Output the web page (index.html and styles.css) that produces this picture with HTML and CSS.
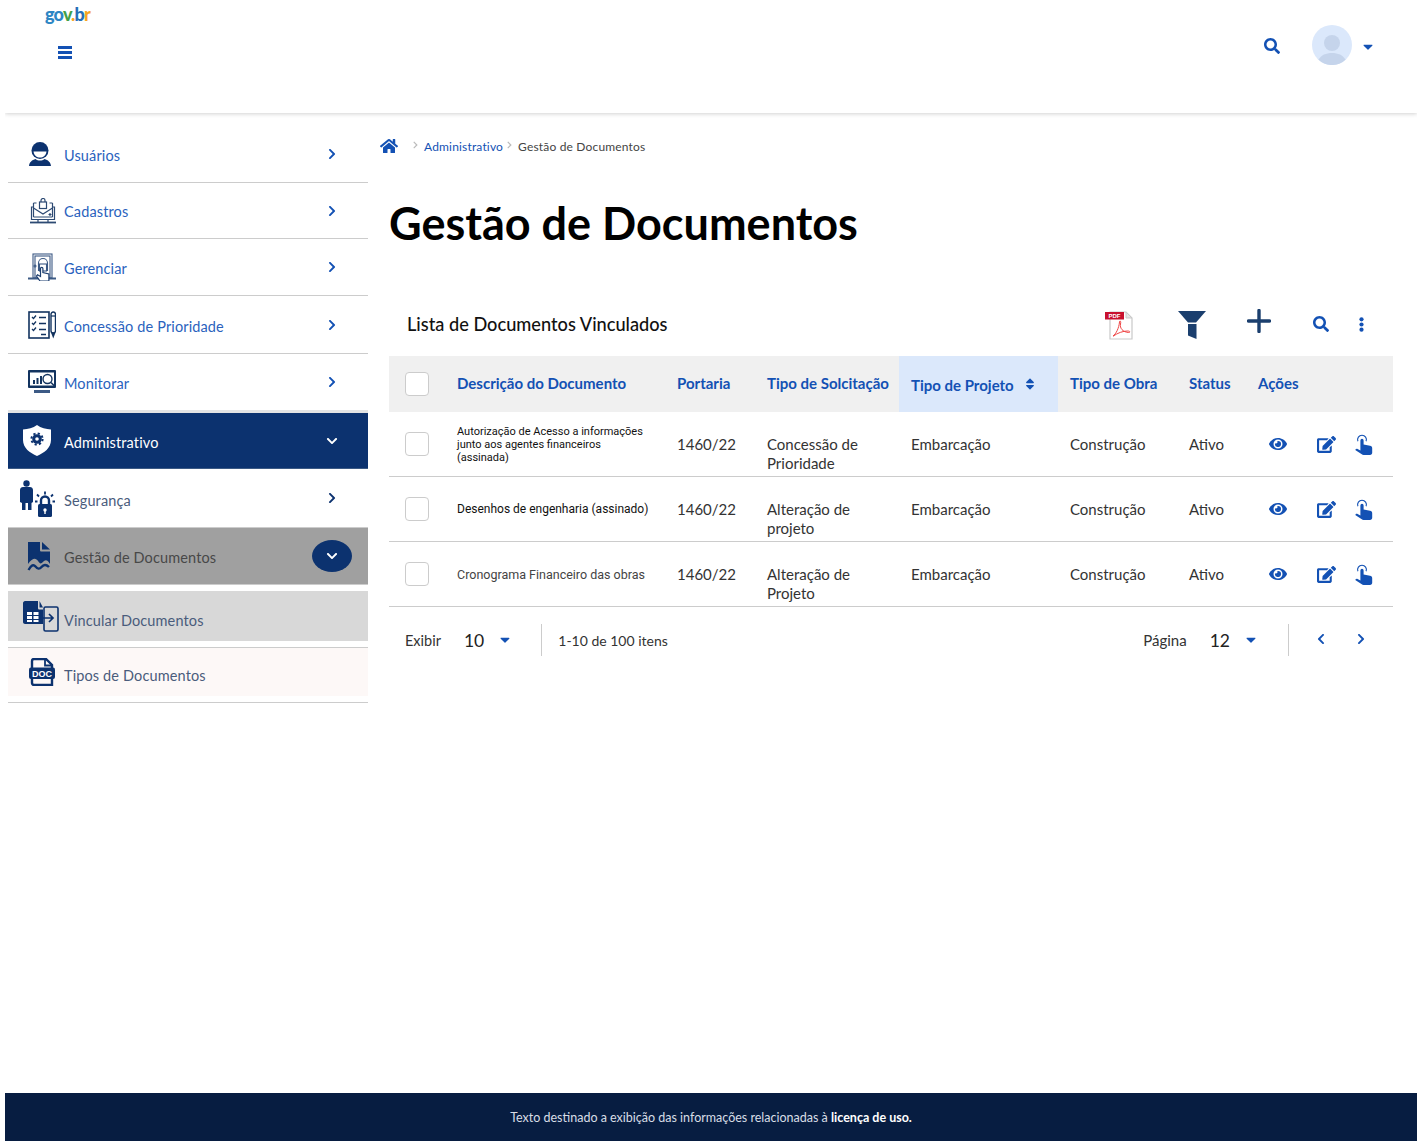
FILE: index.html
```html
<!DOCTYPE html>
<html lang="pt-BR">
<head>
  <meta charset="UTF-8" />
  <title>Gestão de Documentos</title>
  <link rel="stylesheet" href="styles.css">
</head>
<body>
  <svg class="defs" aria-hidden="true">
    <symbol id="i-right" viewBox="0 0 320 512"><path d="M285.476 272.971L91.132 467.314c-9.373 9.373-24.569 9.373-33.941 0l-22.667-22.667c-9.357-9.357-9.375-24.522-.04-33.901L188.505 256 34.484 101.255c-9.335-9.379-9.317-24.544.04-33.901l22.667-22.667c9.373-9.373 24.569-9.373 33.941 0L285.475 239.03c9.373 9.372 9.373 24.568.001 33.941z"/></symbol>
    <symbol id="i-left" viewBox="0 0 320 512"><path d="M34.52 239.03L228.87 44.69c9.37-9.37 24.57-9.37 33.94 0l22.67 22.67c9.36 9.36 9.37 24.52.04 33.9L131.49 256l154.02 154.75c9.34 9.38 9.32 24.54-.04 33.9l-22.67 22.67c-9.37 9.37-24.57 9.37-33.94 0L34.52 272.97c-9.37-9.37-9.37-24.57 0-33.94z"/></symbol>
    <symbol id="i-down" viewBox="0 0 448 512"><path d="M207.029 381.476L12.686 187.132c-9.373-9.373-9.373-24.569 0-33.941l22.667-22.667c9.357-9.357 24.522-9.375 33.901-.04L224 284.505l154.745-154.021c9.379-9.335 24.544-9.317 33.901.04l22.667 22.667c9.373 9.373 9.373 24.569 0 33.941L240.971 381.476c-9.373 9.372-24.569 9.372-33.942 0z"/></symbol>
    <symbol id="i-search" viewBox="0 0 512 512"><path d="M505 442.7L405.3 343c-4.5-4.5-10.6-7-17-7H372c27.6-35.3 44-79.7 44-128C416 93.1 322.9 0 208 0S0 93.1 0 208s93.1 208 208 208c48.3 0 92.7-16.4 128-44v16.3c0 6.4 2.5 12.5 7 17l99.7 99.7c9.4 9.4 24.6 9.4 33.9 0l28.3-28.3c9.4-9.4 9.4-24.6.1-34zM208 336c-70.7 0-128-57.2-128-128 0-70.7 57.2-128 128-128 70.7 0 128 57.2 128 128 0 70.7-57.2 128-128 128z"/></symbol>
    <symbol id="i-caret" viewBox="0 170 320 200"><path d="M31.3 192h257.3c17.8 0 26.7 21.5 14.1 34.1L174.1 354.8c-7.8 7.8-20.5 7.8-28.3 0L17.2 226.1C4.6 213.5 13.5 192 31.3 192z"/></symbol>
    <symbol id="i-eye" viewBox="0 0 576 512"><path d="M572.52 241.4C518.29 135.59 410.93 64 288 64S57.68 135.64 3.48 241.41a32.35 32.35 0 0 0 0 29.19C57.71 376.41 165.07 448 288 448s230.32-71.64 284.52-177.41a32.35 32.35 0 0 0 0-29.19zM288 400a144 144 0 1 1 144-144 143.93 143.93 0 0 1-144 144zm0-240a95.31 95.31 0 0 0-25.31 3.79 47.85 47.85 0 0 1-66.9 66.9A95.78 95.78 0 1 0 288 160z"/></symbol>
    <symbol id="i-edit" viewBox="0 0 576 512"><path d="M402.6 83.2l90.2 90.2c3.8 3.8 3.8 10 0 13.8L274.4 405.6l-92.8 10.3c-12.4 1.4-22.9-9.1-21.5-21.5l10.3-92.8L388.8 83.2c3.8-3.8 10-3.8 13.8 0zm162-22.9l-48.8-48.8c-15.2-15.2-39.9-15.2-55.2 0l-35.4 35.4c-3.8 3.8-3.8 10 0 13.8l90.2 90.2c3.8 3.8 10 3.8 13.8 0l35.4-35.4c15.2-15.3 15.2-40 0-55.2zM384 346.2V448H64V128h229.8c3.2 0 6.2-1.3 8.5-3.5l40-40c7.6-7.6 2.2-20.5-8.5-20.5H48C21.5 64 0 85.5 0 112v352c0 26.5 21.5 48 48 48h352c26.5 0 48-21.5 48-48V306.2c0-10.7-12.9-16-20.5-8.5l-40 40c-2.2 2.3-3.5 5.3-3.5 8.5z"/></symbol>
    <symbol id="i-touch" viewBox="0 0 18 21"><path d="M5.4 6.4a1.6 1.6 0 0 1 3.2 0v4.2l6.4 1.2c1.4.3 2.2 1.2 2.2 2.4v4.600c0 1.2-.8 2.2-2.2 2.2H8.600c-.8 0-1.4-.3-1.8-.8L.6 16.2c-.6-.6.6-2 2-1.2l2.8 1.4z"/><path d="M2.9 7.2a4.4 4.4 0 1 1 8.2 0" fill="none" stroke="currentColor" stroke-width="1.1"/></symbol>
  </svg>

  <header class="topbar">
    <div class="topbar-left">
      <div class="logo"><span class="lg-b">go</span><span class="lg-g">v</span><span class="lg-y">.</span><span class="lg-b2">b</span><span class="lg-y">r</span></div>
      <div class="menu-btn"><span></span><span></span><span></span></div>
    </div>
    <div class="topbar-right">
      <svg class="ic-blue top-search"><use href="#i-search"/></svg>
      <div class="avatar">
        <svg viewBox="0 0 40 40"><circle cx="20" cy="20" r="20" fill="#dbe8fb"/><circle cx="20" cy="18" r="8" fill="#c5d4eb"/><path d="M6.500 34.800C9 30 14 28 20 28s11 2 13.500 6.800A20 20 0 0 1 6.500 34.800z" fill="#c5d4eb"/></svg>
      </div>
      <svg class="ic-blue top-caret"><use href="#i-caret"/></svg>
    </div>
  </header>

  <div class="page">
    <nav class="sidebar">
      <a class="item">
        <span class="item-icon ic-narrow">
          <svg width="22" height="24" viewBox="0 0 22 24"><circle cx="11" cy="8.500" r="8.500" fill="#0c326f"/><path d="M4.500 9.500h13c-.6 4-3.200 6-6.500 6s-5.900-2-6.500-6z" fill="#fff"/><path d="M0 24c.5-4 3-6 6.500-7 1.300 1 2.800 1.500 4.500 1.500s3.200-.5 4.500-1.500c3.500 1 6 3 6.500 7z" fill="#0c326f"/></svg>
        </span>
        <span class="item-text">Usuários</span>
        <svg class="chev"><use href="#i-right"/></svg>
      </a>
      <a class="item h56">
        <span class="item-icon">
          <svg width="26" height="26" viewBox="0 0 26 26" fill="none" stroke="#2d4a73" stroke-width="1.200"><path d="M3 9H1.500v12.500h23V9H23"/><path d="M3.500 5h3M19.500 5h3M3.500 5v14M22.500 5v14M3.500 19h19"/><path d="M3.500 10l9.500 6 9.500-6"/><rect x="9.500" y="4" width="7" height="6.500"/><path d="M11 4V2.500a2 2 0 0 1 4 0V4"/><path d="M18.500 16.500h3M20 15v3"/><path d="M0 24.500h26" stroke-width="1.800"/><path d="M8 22v2M18 22v2"/></svg>
        </span>
        <span class="item-text text-high">Cadastros</span>
        <svg class="chev"><use href="#i-right"/></svg>
      </a>
      <a class="item">
        <span class="item-icon">
          <svg width="28" height="28" viewBox="0 0 28 28" fill="none" stroke="#3c5a85" stroke-width="1.100"><rect x="5" y="1" width="19" height="24"/><rect x="7" y="3" width="15" height="22"/><path d="M0 25.500h28" stroke-width="2"/><path d="M10.500 18v-8a4.500 4.500 0 0 1 9 0v8"/><rect x="11.500" y="11" width="7" height="7"/><circle cx="7" cy="13" r="1" /><path d="M12 28l-3.500-5 1-1.200 3 1.700v-8a1.200 1.200 0 0 1 2.400 0v4l6 1.500v7z" fill="#fff" stroke="#1d3f70" stroke-width="1.200"/></svg>
        </span>
        <span class="item-text">Gerenciar</span>
        <svg class="chev"><use href="#i-right"/></svg>
      </a>
      <a class="item h58">
        <span class="item-icon">
          <svg width="28" height="28" viewBox="0 0 28 28" fill="none" stroke="#12335f"><rect x="1" y="1" width="20" height="26" stroke-width="1.600"/><path d="M4 6l1.500 1.500L8 4.500M4 12l1.500 1.500L8 10.500M4 18l1.500 1.500L8 16.500" stroke-width="1.300"/><path d="M11 6.500h7M11 12.500h7M11 18.500h7M13 23.500h5" stroke-width="1.500"/><rect x="23" y="1" width="4.500" height="21" rx="2.200" stroke-width="1.400"/><path d="M23 5h4.500" stroke-width="1.200"/><path d="M23 21.500l2.250 6 2.250-6z" fill="#12335f" stroke="none"/></svg>
        </span>
        <span class="item-text">Concessão de Prioridade</span>
        <svg class="chev"><use href="#i-right"/></svg>
      </a>
      <a class="item item-last">
        <span class="item-icon">
          <svg width="28" height="24" viewBox="0 0 28 24"><rect x="0" y="0" width="28" height="18" rx="1" fill="#12335f"/><rect x="2" y="2.500" width="24" height="13" fill="#fff"/><path d="M5 10h2v4H5zM8.500 8h2v6h-2zM12 6h2v8h-2z" fill="#12335f"/><circle cx="19.500" cy="9" r="4.500" fill="#fff" stroke="#12335f" stroke-width="1.400"/><path d="M23 12.500l4 4" stroke="#12335f" stroke-width="1.600"/><path d="M6 20h16v3H6z" fill="#3c5a85"/></svg>
        </span>
        <span class="item-text">Monitorar</span>
        <svg class="chev"><use href="#i-right"/></svg>
      </a>
      <a class="item item-active">
        <span class="item-icon ic-narrow">
          <svg width="28" height="31" viewBox="0 0 28 31"><path d="M14 0c4 3 9 4 14 4.500V15c0 8-7 13-14 16C7 28 0 23 0 15V4.500C5 4 10 3 14 0z" fill="#fff"/><circle cx="14" cy="14" r="5.600" fill="none" stroke="#0c326f" stroke-width="2" stroke-dasharray="2.200 2.200"/><circle cx="14" cy="14" r="4.800" fill="#0c326f"/><circle cx="14" cy="14" r="1.800" fill="#fff"/></svg>
        </span>
        <span class="item-text">Administrativo</span>
        <svg class="chev chev-down"><use href="#i-down"/></svg>
      </a>
      <a class="item item-dark">
        <span class="item-icon">
          <svg width="36" height="37" viewBox="0 0 36 37" fill="#0c326f"><circle cx="6.500" cy="3.500" r="3.200"/><path d="M0 10c0-2 1.500-3 3-3h7c1.500 0 3 1 3 3v12l-1.500 1V30H8v-7H5.500v7H2v-7l-2-1z"/><rect x="18" y="24" width="14" height="13" rx="1.500"/><path d="M21 24v-3.500a4 4 0 0 1 8 0V24" fill="none" stroke="#0c326f" stroke-width="2.400"/><circle cx="25" cy="30" r="1.700" fill="#fff"/><rect x="24.300" y="30" width="1.400" height="4" fill="#fff"/><path d="M25 11.500v3M17 14.500l2 2M33 14.500l-2 2M15 21.500h2.500M32.500 21.500H35" fill="none" stroke="#0c326f" stroke-width="1.800"/></svg>
        </span>
        <span class="item-text text-mid">Segurança</span>
        <svg class="chev"><use href="#i-right"/></svg>
      </a>
      <a class="item item-grey">
        <span class="item-icon ic-narrow">
          <svg width="24" height="29" viewBox="0 0 24 29"><path d="M1 0h12v8c0 1 .5 1.500 1.500 1.500H23V22c-3-5-5-4-7-2s-3 2-5-1-5-4-10 3z" fill="#0c326f"/><path d="M15 0l8 7.500h-8z" fill="#0c326f"/><path d="M1.500 28c3-5 5-6 7-3.500s4 3 6 .5 4.500-3 7.500 0" fill="none" stroke="#0c326f" stroke-width="2.400"/></svg>
        </span>
        <span class="item-text">Gestão de Documentos</span>
        <span class="pill"><svg class="chev-pill"><use href="#i-down"/></svg></span>
      </a>
      <a class="sub sub-on">
        <span class="item-icon ic-wide">
          <svg width="36" height="31" viewBox="0 0 36 31"><path d="M2 0h13v7c0 1 .5 1.500 1.500 1.500H20V23H2c-1 0-2-1-2-2V2C0 1 1 0 2 0z" fill="#0c326f"/><path d="M16.500 0L20 6.500h-3.500z" fill="#0c326f"/><path d="M4 11h5v3H4zM10.500 11h5v3h-5zM4 15h5v3H4zM10.500 15h5v3h-5zM4 19h5v2H4zM10.500 19h5v2h-5z" fill="#fff"/><rect x="21" y="6" width="14" height="24" rx="1.500" fill="#d8d8d8" stroke="#0c326f" stroke-width="1.600"/><path d="M20 17h10M26 13l4 4-4 4" fill="none" stroke="#0c326f" stroke-width="1.700"/></svg>
        </span>
        <span class="item-text text-low">Vincular Documentos</span>
      </a>
      <a class="sub sub-off">
        <span class="item-icon ic-doc">
          <svg width="26" height="28" viewBox="0 0 26 28"><path d="M6 1h11l6 6v20H5a2 2 0 0 1-2-2V3a2 2 0 0 1 2-2z" fill="#fdf8f7" stroke="#0c326f" stroke-width="2.400"/><path d="M16 1v6.500h7" fill="none" stroke="#0c326f" stroke-width="1.800"/><rect x="0" y="9.500" width="26" height="11.500" rx="2" fill="#0c326f"/><text x="13" y="18.700" text-anchor="middle" class="doc-text">DOC</text></svg>
        </span>
        <span class="item-text text-low2">Tipos de Documentos</span>
      </a>
    </nav>

    <main class="content">
      <div class="crumbs">
        <svg class="ic-blue crumb-home" viewBox="0 0 576 512"><path d="M280.37 148.26L96 300.11V464a16 16 0 0 0 16 16l112.06-.29a16 16 0 0 0 15.92-16V368a16 16 0 0 1 16-16h64a16 16 0 0 1 16 16v95.64a16 16 0 0 0 16 16.05L464 480a16 16 0 0 0 16-16V300L295.67 148.26a12.19 12.19 0 0 0-15.3 0zM571.6 251.47L488 182.56V44.05a12 12 0 0 0-12-12h-56a12 12 0 0 0-12 12v72.61L318.47 43a48 48 0 0 0-61 0L4.34 251.47a12 12 0 0 0-1.6 16.9l25.5 31A12 12 0 0 0 45.15 301l235.22-193.74a12.19 12.19 0 0 1 15.3 0L530.9 301a12 12 0 0 0 16.9-1.6l25.5-31a12 12 0 0 0-1.7-16.93z"/></svg>
        <svg class="crumb-sep first"><use href="#i-right"/></svg>
        <a class="crumb-link">Administrativo</a>
        <svg class="crumb-sep"><use href="#i-right"/></svg>
        <span>Gestão de Documentos</span>
      </div>

      <h1>Gestão de Documentos</h1>

      <div class="toolbar">
        <div class="toolbar-title">Lista de Documentos Vinculados</div>
        <div class="toolbar-icons">
          <svg class="tb-pdf" width="28" height="29" viewBox="0 0 28 29"><path d="M5 1h16l6 6v21H5z" fill="#fff" stroke="#c9c9c9" stroke-width="1.200"/><path d="M21 1v6h6z" fill="#e4e4e4" stroke="#c9c9c9"/><rect x="0" y="1" width="19" height="7.500" fill="#c8102e"/><text x="9.500" y="7.200" text-anchor="middle" class="pdf-text">PDF</text><path d="M8 25c3-2 6-8 6.500-14 .2-2 1.800-1 1 2-.8 4 2 8 8 8.500 2 .2 2-1.500-1-1.500-4.500 0-10 2-14 5z" fill="none" stroke="#ef4444" stroke-width="1"/></svg>
          <svg class="tb-filter" width="28" height="28" viewBox="0 0 28 28"><path d="M0 0h28l-10 11.500H10z" fill="#1b3f6e"/><path d="M10 13h8.500v15L10 24.500z" fill="#1b3f6e"/></svg>
          <svg class="tb-plus" width="24" height="24" viewBox="0 0 24 24"><path d="M12 1.500v21M1.500 12h21" stroke="#1b3f6e" stroke-width="3.400" stroke-linecap="round"/></svg>
          <svg class="ic-blue tb-search"><use href="#i-search"/></svg>
          <svg class="ic-blue tb-dots" viewBox="0 0 5 15"><circle cx="2.500" cy="2.300" r="2.100"/><circle cx="2.500" cy="7.500" r="2.100"/><circle cx="2.500" cy="12.700" r="2.100"/></svg>
        </div>
      </div>

      <table class="docs">
        <colgroup>
          <col class="c-check"><col class="c-desc"><col class="c-port"><col class="c-tipo"><col class="c-proj"><col class="c-obra"><col class="c-stat"><col class="c-acts">
        </colgroup>
        <thead>
          <tr>
            <th class="cell-check"><span class="check"></span></th>
            <th>Descrição do Documento</th>
            <th>Portaria</th>
            <th>Tipo de Solcitação</th>
            <th class="th-sorted"><span class="sort-wrap">Tipo de Projeto <svg class="ic-blue sort-ic" viewBox="0 0 320 512"><path d="M41 288h238c21.4 0 32.1 25.900 17 41L177 448c-9.400 9.400-24.600 9.400-33.900 0L24 329c-15.100-15.100-4.400-41 17-41zm255-105L177 64c-9.400-9.400-24.600-9.400-33.900 0L24 183c-15.100 15.100-4.400 41 17 41h238c21.400 0 32.100-25.900 17-41z"/></svg></span></th>
            <th>Tipo de Obra</th>
            <th>Status</th>
            <th>Ações</th>
          </tr>
        </thead>
        <tbody>
          <tr>
            <td class="cell-check"><span class="check"></span></td>
            <td class="cell-desc">Autorização de Acesso a informações<br>junto aos agentes financeiros<br>(assinada)</td>
            <td>1460/22</td>
            <td>Concessão de<br>Prioridade</td>
            <td>Embarcação</td>
            <td>Construção</td>
            <td>Ativo</td>
            <td class="cell-acts">
              <svg class="ic-blue a-eye"><use href="#i-eye"/></svg>
              <svg class="ic-blue a-edit"><use href="#i-edit"/></svg>
              <svg class="ic-blue a-touch"><use href="#i-touch"/></svg>
            </td>
          </tr>
          <tr>
            <td class="cell-check"><span class="check"></span></td>
            <td class="cell-desc desc-md">Desenhos de engenharia (assinado)</td>
            <td>1460/22</td>
            <td>Alteração de<br>projeto</td>
            <td>Embarcação</td>
            <td>Construção</td>
            <td>Ativo</td>
            <td class="cell-acts">
              <svg class="ic-blue a-eye"><use href="#i-eye"/></svg>
              <svg class="ic-blue a-edit"><use href="#i-edit"/></svg>
              <svg class="ic-blue a-touch"><use href="#i-touch"/></svg>
            </td>
          </tr>
          <tr>
            <td class="cell-check"><span class="check"></span></td>
            <td class="cell-desc desc-lg">Cronograma Financeiro das obras</td>
            <td>1460/22</td>
            <td>Alteração de<br>Projeto</td>
            <td>Embarcação</td>
            <td>Construção</td>
            <td>Ativo</td>
            <td class="cell-acts">
              <svg class="ic-blue a-eye"><use href="#i-eye"/></svg>
              <svg class="ic-blue a-edit"><use href="#i-edit"/></svg>
              <svg class="ic-blue a-touch"><use href="#i-touch"/></svg>
            </td>
          </tr>
        </tbody>
      </table>

      <div class="pager">
        <div class="pager-group">
          <span class="pager-label pager-label-l">Exibir</span>
          <span class="pager-num">10</span>
          <svg class="ic-blue pager-caret"><use href="#i-caret"/></svg>
          <span class="pager-div"></span>
          <span class="pager-range">1-10 de 100 itens</span>
        </div>
        <div class="pager-group">
          <span class="pager-label">Página</span>
          <span class="pager-num">12</span>
          <svg class="ic-blue pager-caret pager-caret-r"><use href="#i-caret"/></svg>
          <span class="pager-div pager-div-r"></span>
          <svg class="ic-blue pager-arrow"><use href="#i-left"/></svg>
          <svg class="ic-blue pager-arrow pager-next"><use href="#i-right"/></svg>
        </div>
      </div>
    </main>
  </div>

  <footer class="foot">Texto destinado a exibição das informações relacionadas à <b>licença de uso.</b></footer>
</body>
</html>
```

FILE: styles.css
```css
* {
  box-sizing: border-box;
}

html, body {
  height: 100%;
}

body {
  margin: 0 0 0 5px;
  min-height: 1141px;
  display: flex;
  flex-direction: column;
  background: #fff;
  color: #333;
  font-family: 'Lato', 'Open Sans', sans-serif;
  overflow-x: hidden;
}

.defs {
  display: none;
}

.ic-blue {
  fill: #1351b4;
  color: #1351b4;
}

/* top bar */
.topbar {
  height: 113px;
  flex: none;
  display: flex;
  justify-content: space-between;
  box-shadow: 0 1px 4px rgba(0, 0, 0, 0.18);
}

.topbar-left {
  padding: 5px 0 0 40px;
}

.logo {
  font-size: 18px;
  font-weight: 900;
  line-height: 19px;
  letter-spacing: -0.8px;
}

.lg-b { color: #2d86c4; }
.lg-b2 { color: #2670b8; }
.lg-g { color: #43a047; }
.lg-y { color: #f5a623; }

.menu-btn {
  margin: 22px 0 0 13px;
  width: 14px;
  display: flex;
  flex-direction: column;
  gap: 2.500px;
}

.menu-btn span {
  height: 2.500px;
  background: #1351b4;
}

.topbar-right {
  display: flex;
  align-items: flex-start;
  padding: 25px 44px 0 0;
}

.top-search {
  width: 16px;
  height: 16px;
  margin-top: 13px;
}

.avatar {
  width: 40px;
  height: 40px;
  margin-left: 32px;
}

.avatar svg {
  display: block;
}

.top-caret {
  width: 10px;
  height: 6px;
  margin: 19px 0 0 11px;
}

/* sidebar */
.page {
  flex: 1;
  display: flex;
}

.sidebar {
  width: 363px;
  flex: none;
  padding: 13px 0 0 3px;
}

.item, .sub {
  display: flex;
  align-items: center;
  font-size: 14.500px;
  letter-spacing: 0.130px;
  color: #2a62bd;
}

.item {
  height: 57px;
  border-bottom: 1px solid #ccc;
}

.h56 {
  height: 56px;
}

.h58 {
  height: 58px;
}

.item-icon {
  width: 56px;
  flex: none;
  display: flex;
  justify-content: flex-end;
  padding-right: 8px;
}

.item-icon svg {
  display: block;
  flex: none;
}

.ic-narrow {
  padding-right: 13px;
}

.ic-wide {
  padding-right: 5px;
}

.ic-doc {
  padding-right: 9px;
}

.item-text {
  flex: 1;
  padding-top: 3px;
}

.item-text.text-high {
  padding-top: 1px;
}

.item-text.text-mid {
  padding-top: 5px;
}

.item-text.text-low {
  padding-top: 8px;
}

.item-text.text-low2 {
  padding-top: 6px;
}

.chev {
  width: 8px;
  height: 12px;
  margin-right: 32px;
  fill: #1351b4;
}

.chev-down {
  width: 12px;
  margin-right: 30px;
  fill: #fff;
}

.item-last {
  border-bottom: 3px solid #e3e3e3;
  height: 59px;
}

.item-active {
  height: 56px;
  background: #0c326f;
  color: #fff;
  border-bottom: 1px solid #3c5a85;
}

.item-dark {
  height: 59px;
  color: #4a5c7c;
  border-bottom: 1px solid #ccc;
}

.item-dark .chev {
  fill: #0c326f;
}

.item-grey {
  height: 57px;
  background: #a0a0a0;
  color: #484848;
}

.pill {
  width: 40px;
  height: 32px;
  margin-right: 16px;
  border-radius: 50%;
  background: #0c326f;
  display: flex;
  align-items: center;
  justify-content: center;
}

.chev-pill {
  width: 12px;
  height: 12px;
  fill: #fff;
}

.sub {
  color: #4a5c7c;
}

.sub-on {
  height: 50px;
  margin-top: 6px;
  background: #d8d8d8;
}

.sub-off {
  height: 49px;
  margin-top: 6px;
  background: #fdf8f7;
  border-top: 1px solid #ccc;
  box-shadow: 0 6px 0 #fff, 0 7px 0 #ccc;
}

.doc-text {
  font-family: 'Liberation Sans', sans-serif;
  font-size: 9px;
  font-weight: 700;
  letter-spacing: 0;
  fill: #fff;
}

/* main */
.content {
  width: 1004px;
  flex: none;
  margin-left: 21px;
  padding-top: 23px;
}

.crumbs {
  height: 20px;
  margin-left: -9px;
  display: flex;
  align-items: center;
  font-size: 12px;
  letter-spacing: 0.170px;
  color: #444;
}

.crumb-home {
  width: 18px;
  height: 16px;
}

.crumb-sep {
  width: 5px;
  height: 8px;
  margin: -3px 6px 0 4px;
  fill: #bbb;
}

.crumb-sep.first {
  margin-left: 15px;
}

.crumb-link {
  color: #1351b4;
}

h1 {
  margin: 42px 0 0;
  font-size: 45px;
  line-height: 50px;
  font-weight: 700;
  color: #000;
}

.toolbar {
  height: 64px;
  margin-top: 44px;
  display: flex;
  align-items: center;
  justify-content: space-between;
  padding: 0 29px 0 18px;
}

.toolbar-title {
  font-size: 18.200px;
  font-weight: 500;
  color: #111;
}

.toolbar-icons {
  display: flex;
  align-items: center;
}

.tb-pdf {
  margin-top: 3px;
}

.tb-filter {
  margin: 2px 0 0 45px;
}

.tb-plus {
  margin: -6px 0 0 41px;
}

.tb-search {
  width: 16px;
  height: 16px;
  margin-left: 42px;
}

.tb-dots {
  width: 5px;
  height: 15px;
  margin-left: 30px;
}

/* table */
.docs {
  width: 100%;
  table-layout: fixed;
  border-collapse: separate;
  border-spacing: 0;
  font-size: 15px;
  line-height: 19px;
}

.c-check { width: 56px; }
.c-desc { width: 220px; }
.c-port { width: 90px; }
.c-tipo { width: 144px; }
.c-proj { width: 159px; }
.c-obra { width: 119px; }
.c-stat { width: 69px; }
.c-acts { width: 147px; }

.docs th {
  height: 56px;
  padding: 0 0 2px 12px;
  text-align: left;
  font-size: 15px;
  font-weight: 700;
  color: #1351b4;
  white-space: nowrap;
  background: #f0f0f0;
}

.docs th.th-sorted {
  padding-top: 4px;
  background: #dbe8fb;
}

.sort-wrap {
  display: flex;
  align-items: center;
}

.sort-ic {
  width: 10px;
  height: 14px;
  margin: -2px 0 0 11px;
}

.docs th.cell-check, .docs td.cell-check {
  padding: 0 0 1px 16px;
  vertical-align: middle;
}

.check {
  display: block;
  width: 24px;
  height: 24px;
  background: #fff;
  border: 1px solid #ccc;
  border-radius: 4px;
}

.docs td {
  height: 65px;
  padding: 23px 0 0 12px;
  vertical-align: top;
  color: #333;
  border-bottom: 1px solid #ccc;
}

.docs td.cell-desc {
  padding-top: 0;
  vertical-align: middle;
  font-family: 'Roboto', sans-serif;
  font-size: 11px;
  line-height: 13px;
  color: #111;
}

.docs td.desc-md {
  font-size: 12px;
}

.docs td.desc-lg {
  font-size: 12.500px;
  color: #444;
}

.docs td.cell-acts {
  padding: 0 0 0 23px;
  vertical-align: middle;
}

.cell-acts svg {
  display: inline-block;
  vertical-align: middle;
}

.a-eye {
  width: 18px;
  height: 16px;
}

.a-edit {
  width: 19px;
  height: 17px;
  margin-left: 26px;
}

.a-touch {
  width: 18px;
  height: 21px;
  margin-left: 15px;
}

/* pagination */
.pager {
  display: flex;
  justify-content: space-between;
  height: 32px;
  margin-top: 17px;
  padding: 0 28px 0 16px;
  font-size: 15px;
}

.pager-group {
  display: flex;
  align-items: center;
}

.pager-label-l {
  font-size: 14.500px;
}

.pager-num {
  margin-left: 23px;
  font-size: 17.500px;
  color: #222;
}

.pager-caret {
  width: 10px;
  height: 6px;
  margin-left: 16px;
}

.pager-div {
  width: 1px;
  height: 32px;
  margin: 0 16px 0 31px;
  background: #ccc;
}

.pager-div-r {
  margin: 0 28px 0 32px;
}

.pager-range {
  font-size: 14px;
}

.pager-arrow {
  width: 8px;
  height: 12px;
  margin-top: -2px;
}

.pager-next {
  margin-left: 32px;
}

/* footer */
.foot {
  height: 48px;
  flex: none;
  background: #071d41;
  color: #d8dde6;
  font-size: 12.500px;
  text-align: center;
  line-height: 50px;
}

.foot b {
  color: #fff;
}

.pdf-text {
  font-family: 'Liberation Sans', sans-serif;
  font-size: 6px;
  font-weight: 700;
  fill: #fff;
}
```
